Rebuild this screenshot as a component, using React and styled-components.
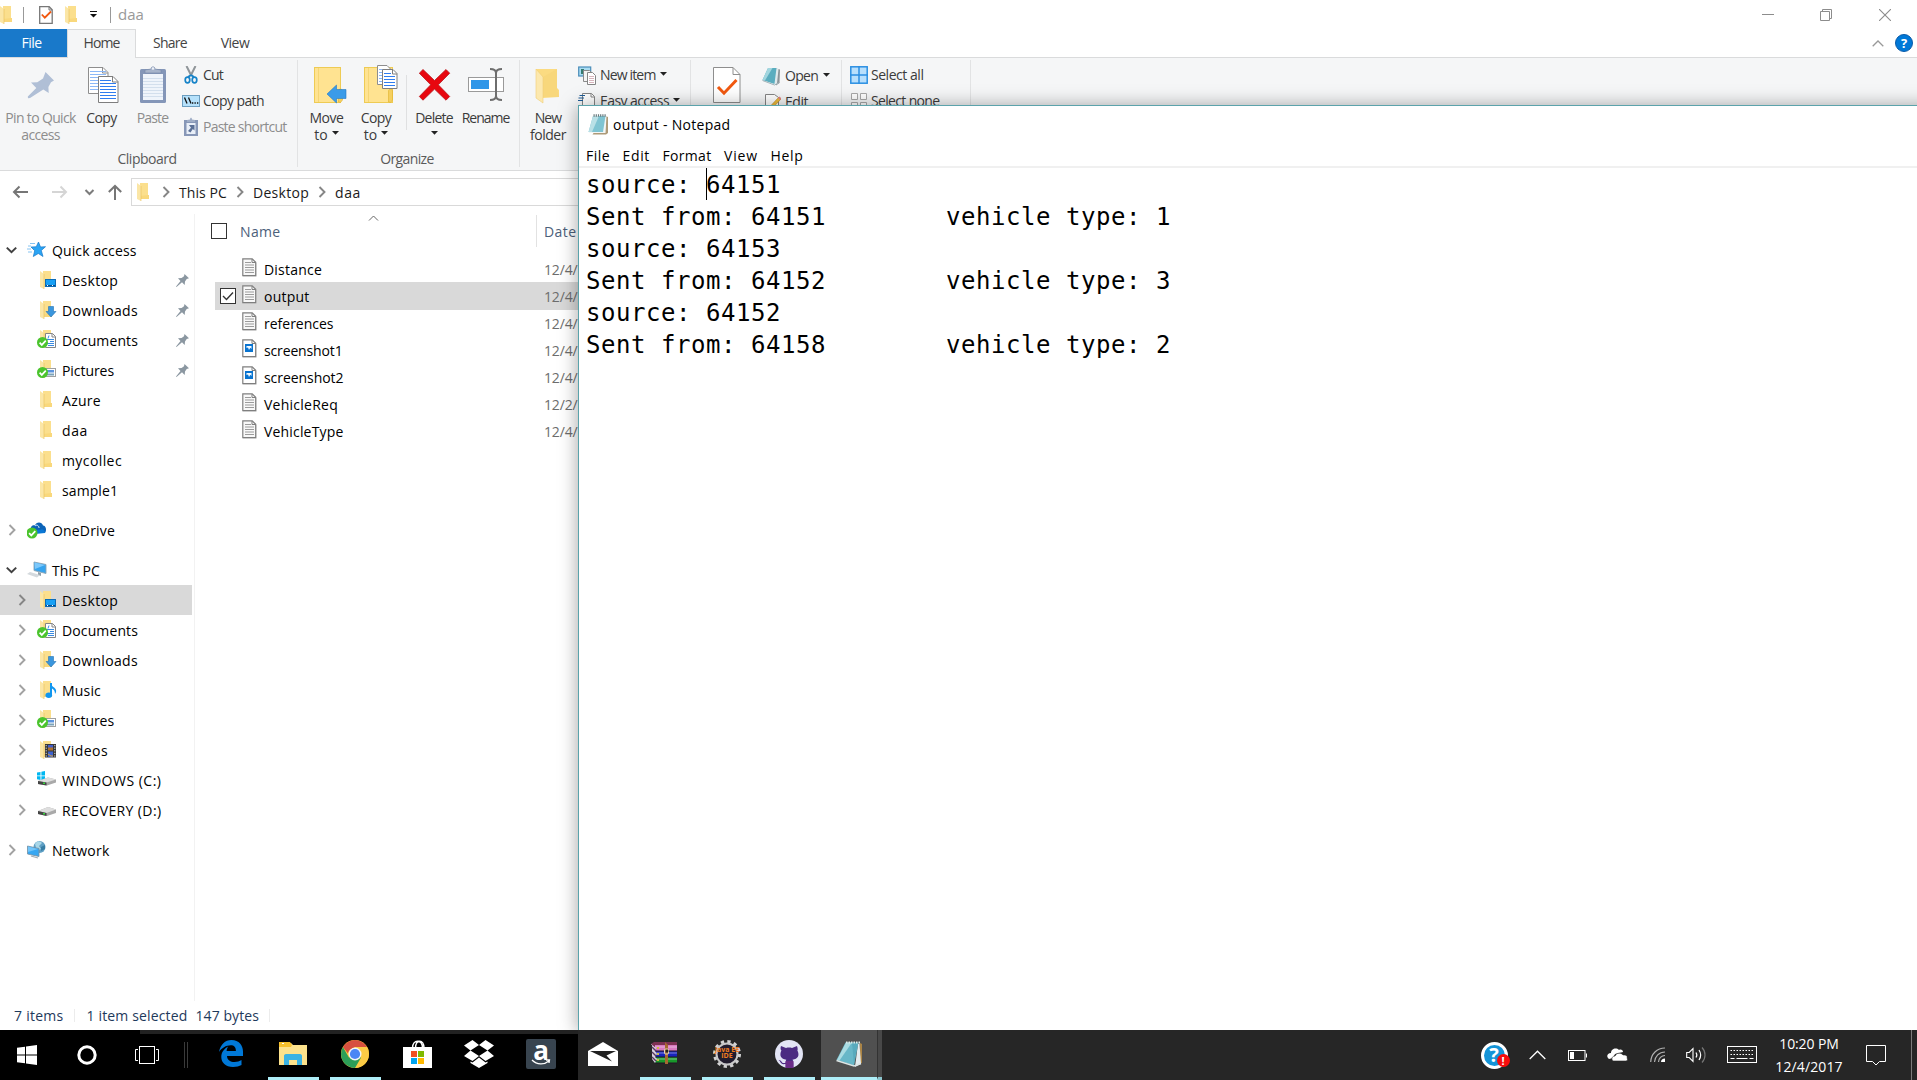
import React, { useLayoutEffect, useRef, useState } from "react";
import styled, { createGlobalStyle, css } from "styled-components";

const GlobalStyle = createGlobalStyle`
  * { box-sizing: border-box; }
  html, body { margin: 0; padding: 0; overflow: hidden; background: #fff; }
  body { font-family: "Open Sans", "Noto Sans", sans-serif; font-size: 14px; color: #000; }
  svg { display: block; flex: none; }
`;

/* ---------- text with controlled tracking ---------- */

const SIDE_BEARING = 1.5;

const Run = styled.span`
  display: inline-block;
  white-space: pre;
`;

function Text({ w, children }) {
  const ref = useRef(null);
  const [tracking, setTracking] = useState(0);
  useLayoutEffect(() => {
    if (!w) return;
    const natural = ref.current.getBoundingClientRect().width;
    setTracking((w + SIDE_BEARING - natural) / String(children).length);
  }, [w, children]);
  return (
    <Run ref={ref} style={{ letterSpacing: `${tracking}px` }}>
      {children}
    </Run>
  );
}

/* ---------- shared drawings ---------- */

const Svg = ({ w, h, children, ...rest }) => (
  <svg width={w} height={h} viewBox={`0 0 ${w} ${h}`} fill="none" {...rest}>
    {children}
  </svg>
);

const FolderShape = () => (
  <>
    <path d="M3 0h8v12h1v4H3z" fill="#f9d87c" />
    <path d="M3 0h8v12L3 13z" fill="#fbdf8d" />
    <path d="M0 0l4 3v15l-4-2z" fill="#fbe6a6" />
    <path d="M4 3v15" stroke="#e8c058" strokeWidth=".6" />
  </>
);

const Folder = () => (
  <Svg w={12} h={18}><FolderShape /></Svg>
);

const GreenCheck = () => (
  <>
    <circle cx="5.5" cy="12.5" r="5.5" fill="#4bc42d" />
    <path d="M2.6 12.6l2.2 2.3 4-4.2" stroke="#fff" strokeWidth="1.7" />
  </>
);

const icons = {
  folder: <Svg w={20} h={20}><g transform="translate(3 1)"><FolderShape /></g></Svg>,
  desktop: (
    <Svg w={20} h={20}>
      <g transform="translate(3 1)"><FolderShape /></g>
      <rect x="8.500" y="9.500" width="10" height="7" fill="#18a0f5" stroke="#0b6cb8" />
      <path d="M9 15.500h9" stroke="#0a4f8a" />
      <path d="M10 15.500h1M15 15.500h1" stroke="#fff" />
    </Svg>
  ),
  downloads: (
    <Svg w={20} h={20}>
      <g transform="translate(3 1)"><FolderShape /></g>
      <path d="M11.500 6.500h5v5h2.500l-5 5.500-5-5.500h2.500z" fill="#3a96dd" stroke="#2472b4" strokeWidth=".6" />
    </Svg>
  ),
  documents: (
    <Svg w={20} h={20}>
      <g transform="translate(3 0)"><FolderShape /></g>
      <path d="M8.500 3.500h7l3 3v11h-10z" fill="#fff" stroke="#858585" />
      <path d="M15 3.500v3.500h3.500" stroke="#858585" />
      <path d="M10 9.500h7M13 11.500h4M10 13.500h7M11 15.500h6M12 5.500l-1 3" stroke="#3b8be0" />
      <GreenCheck />
    </Svg>
  ),
  pictures: (
    <Svg w={20} h={20}>
      <g transform="translate(3 0)"><FolderShape /></g>
      <rect x="8.500" y="8.500" width="10" height="8" fill="#fff" stroke="#a0a0a0" />
      <rect x="10" y="10" width="7" height="2.500" fill="#5b93dd" />
      <path d="M10 14.500h7" stroke="#7ba2b8" strokeWidth="2" />
      <GreenCheck />
    </Svg>
  ),
  music: (
    <Svg w={20} h={20}>
      <g transform="translate(3 1)"><FolderShape /></g>
      <path d="M14 3v12" stroke="#1197f0" strokeWidth="2" />
      <path d="M13 3c2 4 5 4 6 7 .5 2-.5 3-1 4 0-4-2-5-4-6z" fill="#1197f0" />
      <ellipse cx="11.800" cy="15.300" rx="3.300" ry="2.700" fill="#1197f0" />
    </Svg>
  ),
  videos: (
    <Svg w={20} h={20}>
      <g transform="translate(3 1)"><FolderShape /></g>
      <rect x="8" y="4" width="11" height="13.500" fill="#383838" />
      <path d="M9.200 5v12M17.800 5v12" stroke="#ddd" strokeWidth="1" strokeDasharray="1.200 1.400" />
      <rect x="11" y="5" width="5" height="5.500" fill="#b0712d" />
      <rect x="11" y="5" width="5" height="2.500" fill="#425ecb" />
      <rect x="11" y="11.500" width="5" height="5.500" fill="#3d62cf" />
      <path d="M11 14l3 2h2" stroke="#d7a43d" />
    </Svg>
  ),
  windowsDrive: (
    <Svg w={20} h={20}>
      <path d="M0 2.500l3.500-.6v3.600H0zM4.400 1.700L8 1v4.500H4.400zM0 6.300h3.500v3.600L0 9.300zM4.400 6.300H8v4.400l-3.600-.6z" fill="#00b7f1" />
      <path d="M1 11l10-3.500L19 9.500v3L10 15.500 1 14z" fill="#a9a9a9" />
      <path d="M1 11l10-3.500L19 9.500 9.500 12.500z" fill="#dedede" />
      <path d="M1 11l8.500 1.500v3L1 14z" fill="#444" />
      <rect x="6" y="12.500" width="2" height="1.500" fill="#37d43c" />
    </Svg>
  ),
  drive: (
    <Svg w={20} h={20}>
      <path d="M1 11l10-4 8 2.500v3.500l-9 3L1 14z" fill="#a9a9a9" />
      <path d="M1 11l10-4 8 2.500-9.500 3.500z" fill="#dedede" />
      <path d="M1 11l8.500 2v3L1 14z" fill="#444" />
      <rect x="6" y="13" width="2" height="1.500" fill="#37d43c" />
    </Svg>
  ),
  star: (
    <Svg w={20} h={20}>
      <path d="M11.500 2l2 5 5-.3-4.200 3.800 1.700 6-4.700-3-5 3 1.400-5.800L4 7l5.200-.2z" fill="#2aa4f4" stroke="#1878c8" strokeWidth=".7" />
      <path d="M3 3.500h5M1 6h3M0 9h4M1 12h4" stroke="#79bdf0" strokeWidth=".9" />
    </Svg>
  ),
  cloud: (
    <Svg w={20} h={20}>
      <path d="M4 9.500c-1-3 2-5 4-4 1-4 7-4 8 0 3 0 4 5 2 7.500H6z" fill="#0b63b8" />
      <path d="M8 6c2-2 4 0 4 2" stroke="#e8f3ff" />
      <path d="M8 14c0-3 2-5 5-4 2-2 5 0 5 3z" fill="#0a78d6" />
      <g transform="translate(-.5 .5)"><GreenCheck /></g>
    </Svg>
  ),
  pc: (
    <Svg w={20} h={20}>
      <path d="M7 2l12 2.500v9L7 10.500z" fill="#35a3ee" stroke="#8ca3b1" strokeWidth=".9" />
      <path d="M7.500 2.500L18 5 8 9z" fill="#7cc8fb" />
      <path d="M11 12l3 1v3l-3-1z" fill="#90a0aa" />
      <path d="M0 14l3-2 10 3-3 2.500z" fill="#d4d9dd" />
    </Svg>
  ),
  network: (
    <Svg w={20} h={20}>
      <circle cx="12.500" cy="7" r="6" fill="#5e9fc4" />
      <path d="M8 4c2-4 5-3 7-1l-3 3 2 3-4 2z" fill="#a9d7e8" />
      <path d="M14 7l4-2v4l-4 2z" fill="#377da4" />
      <path d="M.5 6L12 8.500v8L.5 14z" fill="#37a7f2" stroke="#7890a0" strokeWidth=".8" />
      <path d="M1 6.500l10 2.500L1 12z" fill="#72c5fa" />
      <path d="M4 16l7 2" stroke="#a4adb2" strokeWidth="1.300" />
    </Svg>
  ),
};

const Caret = ({ open, dark }) => (
  <Svg w={14} h={14}>
    {open ? (
      <path d="M1.800 4.600L6.500 9.200l4.700-4.600" stroke="#404040" strokeWidth="2" />
    ) : (
      <path d="M4.500 2L9.500 7l-5 5" stroke={dark ? "#868686" : "#a2a2a2"} strokeWidth="1.900" />
    )}
  </Svg>
);

const PinSmall = () => (
  <Svg w={13} h={13}>
    <path d="M8.500 0L13 4.300l-2.300.8L9 7.500 8.700 11 6 8.300.5 13 0 12.500 4.500 7 2 4.300l3.600-.2L8 2.300z" fill="#8b97a1" />
  </Svg>
);

const DropArrow = () => (
  <Svg w={7} h={4}><path d="M0 0h7L3.500 3.800z" fill="#222" /></Svg>
);

/* ---------- title bar and tabs ---------- */

const Screen = styled.div`
  position: relative;
  width: 1917px;
  height: 1080px;
  overflow: hidden;
  background: #fff;
`;

const Explorer = styled.div`
  display: flex;
  flex-direction: column;
  height: 1030px;
`;

const TitleBar = styled.header`
  display: flex;
  align-items: center;
  height: 29px;
  padding-right: 26px;
  color: #999;
  font-size: 15px;
`;

const QuickItem = styled.div`
  flex: none;
  margin-left: ${(p) => p.$gap}px;
`;

const TitleName = styled.div`
  margin: -2px 0 0 7px;
`;

const TitleRule = styled.i`
  width: 1px;
  height: 16px;
  margin-left: ${(p) => p.$gap}px;
  background: #999;
`;

const WindowControls = styled.div`
  display: flex;
  gap: 46px;
  margin-left: auto;

  svg:last-child { margin-left: 1px; }
`;

const TabBar = styled.nav`
  display: flex;
  align-items: stretch;
  height: 29px;
  border-bottom: 1px solid #dadbdc;
`;

const Tab = styled.div`
  display: flex;
  align-items: center;
  justify-content: center;
  width: ${(p) => p.$w}px;
  padding-bottom: 1px;
  color: #444;
  ${(p) => p.$file && css`
    background: #1979ca;
    color: #fff;
    height: 28px;
    padding-right: 4px;
  `}
  ${(p) => p.$active && css`
    height: 29px;
    background: #f5f6f7;
    border: 1px solid #dadbdc;
    border-bottom: 0;
    padding-bottom: 3px;
  `}
`;

const TabTools = styled.div`
  display: flex;
  align-items: center;
  gap: 11px;
  margin-left: auto;
  padding-right: 4px;
`;

/* ---------- ribbon ---------- */

const RibbonBar = styled.section`
  display: flex;
  height: 113px;
  background: #f5f6f7;
  border-bottom: 1px solid #dadbdc;
`;

const Group = styled.div`
  display: flex;
  flex-direction: column;
  flex: none;
  width: ${(p) => p.$w}px;
  height: 107px;
  margin-top: 2px;
  border-right: 1px solid #e2e3e4;
`;

const GroupBody = styled.div`
  display: flex;
  align-items: flex-start;
  flex: 1;
  padding: 5px 0 0 ${(p) => p.$left}px;
`;

const GroupName = styled.div`
  height: 20px;
  margin-bottom: -2px;
  padding-right: 3px;
  line-height: 20px;
  text-align: center;
  color: #5a5a5a;
`;

const BigButton = styled.div`
  display: flex;
  flex-direction: column;
  align-items: center;
  flex: none;
  width: ${(p) => p.$w}px;
  color: ${(p) => (p.$off ? "#8d8d8d" : "#3b3b3b")};
  line-height: 17px;
`;

const BigIcon = styled.div`
  height: 44px;
`;

const BigLine = styled.div`
  display: flex;
  align-items: center;
  gap: 4px;
  height: 17px;
`;

const InnerRule = styled.i`
  width: 1px;
  height: 55px;
  margin: 10px 2px 0 5px;
  background: #dfe0e1;
`;

const SmallColumn = styled.div`
  display: flex;
  flex-direction: column;
  margin-left: ${(p) => p.$left}px;
  padding-top: ${(p) => p.$top || 0}px;
`;

const SmallButton = styled.div`
  display: flex;
  align-items: center;
  gap: ${(p) => p.$gap || 3}px;
  height: 26px;
  margin-top: ${(p) => p.$lift || 0}px;
  color: ${(p) => (p.$off ? "#8d8d8d" : "#3b3b3b")};

  > span { margin-top: -1px; }
`;

const ArrowSlot = styled.div`
  margin: -3px 0 0 1px;
`;

const PageLines = ({ x, y, n, w, color }) =>
  Array.from({ length: n }, (_, i) => (
    <path key={i} d={`M${x} ${y + i * 3}h${w}`} stroke={color} />
  ));

const big = {
  pin: (
    <path d="M24.500 7L33 15.500l-3 1.700-2.600 4.800.3 6-5.400-3.600L9 33l-2 .3-.2-1.800L15.300 23 10 17.500l6.300-.3 5.700-3.600z" fill="#b0bfd6" />
  ),
  copy: (
    <>
      <path d="M6.500 2.500H21l5 5v21H6.500z" fill="#fff" stroke="#8e8e8e" />
      <path d="M20.500 2.500v5.500H26" stroke="#8e8e8e" />
      <PageLines x={8} y={6.5} n={7} w={16} color="#8bb8f8" />
      <path d="M16.500 11.500H31l5 5v21H16.500z" fill="#fff" stroke="#7e7e7e" />
      <path d="M30.500 11.500V17H36" stroke="#7e7e7e" />
      <PageLines x={18} y={15.5} n={1} w={11} color="#2f7df0" />
      <PageLines x={18} y={18.5} n={6} w={16} color="#2f7df0" />
    </>
  ),
  paste: (
    <>
      <rect x="7" y="4" width="26" height="34" rx="1.500" fill="#8496b8" />
      <rect x="10" y="9" width="20" height="26" fill="#eff4fb" />
      <PageLines x={10} y={13.5} n={7} w={20} color="#d3dfed" />
      <path d="M12 8V5l6-1c0-3 4-3 4 0l6 1v3z" fill="#a7b4cb" stroke="#7688a8" strokeWidth=".6" />
      <circle cx="20" cy="3.500" r="1.200" fill="#eef2f8" />
    </>
  ),
  moveTo: (
    <>
      <rect x="7.500" y="2.500" width="26" height="35" fill="#ffe391" stroke="#eecb54" />
      <path d="M11.500 3v34" stroke="#f5d574" />
      <path d="M31.500 37V26c0-2.500 4-2.500 4 0v9l-2 2.500z" fill="#f5cf5f" stroke="#dfb22e" strokeWidth=".6" />
      <path d="M20 29l9.500-9v4.500H39v9h-9.500V38z" fill="#3a9be8" stroke="#257bc4" strokeWidth=".6" />
    </>
  ),
  copyTo: (
    <>
      <rect x="8.500" y="2.500" width="28" height="35" fill="#ffe391" stroke="#eecb54" />
      <path d="M12.500 3v34" stroke="#f5d574" />
      <path d="M32.500 37V26c0-2.500 4-2.500 4 0v9l-2 2.500z" fill="#f5cf5f" stroke="#dfb22e" strokeWidth=".6" />
      <path d="M21.500.5H31l4 4v15H21.500z" fill="#fff" stroke="#8e8e8e" />
      <PageLines x={23} y={4.5} n={5} w={10} color="#8bb8f8" />
      <path d="M26.500 4.500H37l4 4v15H26.500z" fill="#fff" stroke="#7e7e7e" />
      <path d="M36.500 4.500V9H41" stroke="#7e7e7e" />
      <PageLines x={28} y={8.5} n={1} w={7} color="#2f7df0" />
      <PageLines x={28} y={11.5} n={4} w={11} color="#2f7df0" />
    </>
  ),
  remove: (
    <path d="M9 4.500L20.500 15.500 32 4.500l3.700 3.700L24.300 19.800 35.700 31.500 32 35.200 20.500 24.100 9 35.200 5.300 31.500l11.400-11.700L5.300 8.200z" fill="#e8070f" stroke="#b9141a" strokeWidth=".8" />
  ),
  rename: (
    <>
      <rect x="2.500" y="12.500" width="35" height="14" fill="#fff" stroke="#9a9a9a" />
      <rect x="5" y="15" width="18" height="9" fill="#2f96e8" />
      <path d="M24 4c4 0 6 1 6 4 0-3 2-4 6-4M30 7v25M24 35c4 0 6-1 6-4 0 3 2 4 6 4" stroke="#6e6e6e" strokeWidth="2" />
    </>
  ),
  newFolder: (
    <>
      <path d="M8 4h21v19l2 2v7l-16 1z" fill="#fbdb81" />
      <path d="M15 12L29 4v19l2 9H15z" fill="#f7d478" opacity=".6" />
      <path d="M8 4l7 8v26l-7-5z" fill="#fce8ae" stroke="#f0cf75" strokeWidth=".6" />
    </>
  ),
  properties: (
    <>
      <path d="M6.500 2.500H26l7 7v28H6.500z" fill="#fff" stroke="#8e8e8e" />
      <path d="M26 2.500V9.500h7" stroke="#8e8e8e" />
      <path d="M11 22l6 6.200L29.500 15" stroke="#f1580f" strokeWidth="3" />
    </>
  ),
};

const ArrowUp = styled.div`
  margin-top: -4px;
`;

const Big = ({ icon, w, off, lines, arrow }) => (
  <BigButton $w={w} $off={off}>
    <BigIcon><Svg w={40} h={40} overflow="visible">{big[icon]}</Svg></BigIcon>
    {lines.map(([label, width], i) => (
      <BigLine key={label || i}>
        {label && <Text w={width}>{label}</Text>}
        {arrow && i === lines.length - 1 && <ArrowUp><DropArrow /></ArrowUp>}
      </BigLine>
    ))}
  </BigButton>
);

const ScissorsIcon = () => (
  <Svg w={18} h={18}>
    <path d="M4.500 0l5 10M13.500 0l-5 10" stroke="#8f9599" strokeWidth="2" />
    <path d="M9 9l-3 2M9 9l3 2" stroke="#1683c8" strokeWidth="2" />
    <ellipse cx="5.500" cy="14" rx="2.300" ry="2.800" stroke="#1683c8" strokeWidth="1.700" />
    <ellipse cx="12.500" cy="14" rx="2.300" ry="2.800" stroke="#1683c8" strokeWidth="1.700" />
  </Svg>
);

const PathIcon = () => (
  <Svg w={18} h={12}>
    <rect x=".5" y=".5" width="17" height="11" fill="#b5e1fb" stroke="#6c9ec0" />
    <path d="M2.500 2.500l2.500 6M6.500 2.500l2.500 6" stroke="#111" strokeWidth="1.300" />
    <path d="M10 8h1.300M12.500 8h1.300M15 8h1.300" stroke="#111" strokeWidth="1.300" />
  </Svg>
);

const ShortcutIcon = () => (
  <Svg w={18} h={20}>
    <rect x="2" y="3" width="14" height="16" fill="#8797b7" />
    <rect x="4.500" y="6" width="9" height="11" fill="#e9eff8" />
    <path d="M5 5V3l3-.5c0-2.500 2-2.500 2 0l3 .5v2z" fill="#9fadc6" />
    <path d="M7 8h5.500v5.500L10.800 12 8.500 15.500 6 14l3-3.300z" fill="#5b7096" />
  </Svg>
);

const NewItemIcon = () => (
  <Svg w={19} h={19}>
    <rect x=".7" y="1" width="12" height="9" fill="#a9dcf2" stroke="#4a8dba" strokeWidth="1.200" />
    <rect x="3" y="3" width="3" height="5" fill="#367b70" />
    <path d="M5.500 4.500h6l2 2v9h-8z" fill="#f4f4f4" stroke="#8b8b8b" />
    <path d="M9.500 6.500h5l3 3v9h-8z" fill="#fff" stroke="#858585" />
    <path d="M11 10.500h5M11 12.500h5M11 14.500h5M11 16.500h5" stroke="#d7b5bd" />
  </Svg>
);

const EasyAccessIcon = () => (
  <Svg w={19} h={19}>
    <path d="M4.500 1.500h9l3 3v14h-12z" fill="#fff" stroke="#858585" />
    <path d="M13 1.500V5h3.500" stroke="#858585" />
    <path d="M1.500 3.500H7M.5 6H6M0 8.500h5" stroke="#1e5d98" strokeWidth="1.200" />
  </Svg>
);

const NotepadTilt = ({ size }) => (
  <svg width={size} height={size} viewBox="0 0 28 28" fill="none">
    <path d="M25 3l2 1v19l-3 1z" fill="#aa8446" />
    <path d="M24.500 3.500L26 24l-6 3 3-23z" fill="#e5edf0" />
    <path d="M10.500 2.500h13L19 25.500 1.500 20z" fill="#68b7c8" />
    <path d="M11 2.500h6L4.500 20.500 2 20z" fill="#aadbe2" />
    <path d="M17 2.500h6l-4 22z" fill="#4ba0b4" opacity=".55" />
    <path d="M11 2.500h14" stroke="#dce9e7" strokeWidth="2" strokeDasharray="1.500 1" />
    <path d="M1.500 20.500L19 26l7-2.500" stroke="#dce5e5" strokeWidth="1.400" />
  </svg>
);

const OpenIcon = () => (
  <Svg w={19} h={19}>
    <path d="M14 1.500l4 1-.5 13.500-3.500 2.500z" fill="#8c9498" />
    <path d="M13.500 1l3 1-1.500 14.500-2 1.500z" fill="#dfe9ec" />
    <path d="M6 1h8.500l-2 16L.5 13z" fill="#5badbf" />
    <path d="M6 1h4.500L3 13.500.5 13z" fill="#a2d6df" />
    <path d="M.5 13.500L12.500 18l5-2.500" stroke="#a3b3b8" />
  </Svg>
);

const EditIcon = () => (
  <Svg w={19} h={19}>
    <path d="M3.500 1.500h9l4 3v13h-13z" fill="#fff" stroke="#858585" />
    <path d="M9 12.500L17 4l2 2-8 8.500-3 1z" fill="#f0bd3c" stroke="#b98a23" strokeWidth=".6" />
    <path d="M16 5l1.500-1.500 2 2L18 7z" fill="#df8187" />
  </Svg>
);

const SelectIcon = ({ on }) => (
  <Svg w={18} h={18}>
    {on ? (
      <>
        <rect x=".8" y=".8" width="16.400" height="16.400" fill="#b8dffc" stroke="#2b8fe2" strokeWidth="1.500" />
        <path d="M9 0v18M0 9h18" stroke="#2b8fe2" strokeWidth="1.500" />
      </>
    ) : (
      <path d="M1.500 1.500h6v6h-6zM10.500 1.500h6v6h-6zM1.500 10.500h6v6h-6zM10.500 10.500h6v6h-6z" fill="#fff" stroke="#a9a9a9" />
    )}
  </Svg>
);

function Ribbon() {
  return (
    <RibbonBar>
      <Group $w={298}>
        <GroupBody $left={4}>
          <Big icon="pin" w={73} off lines={[["Pin to Quick", 69], ["access", 37]]} />
          <Big icon="copy" w={49} lines={[["Copy", 29]]} />
          <Big icon="paste" w={53} off lines={[["Paste", 30]]} />
          <SmallColumn $left={3} $top={-2}>
            <SmallButton $lift={-3}><ScissorsIcon /><Text w={18.5}>Cut</Text></SmallButton>
            <SmallButton><PathIcon /><Text w={59.5}>Copy path</Text></SmallButton>
            <SmallButton $off><ShortcutIcon /><Text w={82}>Paste shortcut</Text></SmallButton>
          </SmallColumn>
        </GroupBody>
        <GroupName><Text w={57.5}>Clipboard</Text></GroupName>
      </Group>
      <Group $w={222}>
        <GroupBody $left={4}>
          <Big icon="moveTo" w={49} arrow lines={[["Move", 32.5], ["to", 12]]} />
          <Big icon="copyTo" w={50} arrow lines={[["Copy", 29], ["to", 12]]} />
          <InnerRule />
          <Big icon="remove" w={50} arrow lines={[["Delete", 36], ["", 0]]} />
          <Big icon="rename" w={53} lines={[["Rename", 46]]} />
        </GroupBody>
        <GroupName><Text w={52}>Organize</Text></GroupName>
      </Group>
      <Group $w={171}>
        <GroupBody $left={4}>
          <Big icon="newFolder" w={48} lines={[["New", 25], ["folder", 34.5]]} />
          <SmallColumn $left={6}>
            <SmallButton $lift={-3}><NewItemIcon /><Text w={54}>New item</Text><ArrowSlot><DropArrow /></ArrowSlot></SmallButton>
            <SmallButton><EasyAccessIcon /><Text w={67.5}>Easy access</Text><ArrowSlot><DropArrow /></ArrowSlot></SmallButton>
          </SmallColumn>
        </GroupBody>
      </Group>
      <Group $w={151}>
        <GroupBody $left={16}>
          <Big icon="properties" w={40} lines={[]} />
          <SmallColumn $left={15}>
            <SmallButton $lift={-2} $gap={4}><OpenIcon /><Text w={31.5}>Open</Text><ArrowSlot><DropArrow /></ArrowSlot></SmallButton>
            <SmallButton $gap={4}><EditIcon /><Text w={21.5}>Edit</Text></SmallButton>
          </SmallColumn>
        </GroupBody>
      </Group>
      <Group $w={129}>
        <GroupBody $left={8}>
          <SmallColumn $left={0}>
            <SmallButton $lift={-3}><SelectIcon on /><Text w={51}>Select all</Text></SmallButton>
            <SmallButton><SelectIcon /><Text w={67}>Select none</Text></SmallButton>
          </SmallColumn>
        </GroupBody>
      </Group>
    </RibbonBar>
  );
}

/* ---------- address bar ---------- */

const AddressRow = styled.div`
  display: flex;
  align-items: center;
  height: 43px;
  padding: 0 0 1px 12px;
`;

const AddressBox = styled.div`
  display: flex;
  align-items: center;
  flex: 1;
  height: 28px;
  margin-left: 8px;
  padding-left: 5px;
  border: 1px solid #d9d9d9;
  color: #1a1a1a;
`;

const Crumb = styled.div`
  display: flex;
  align-items: center;
  gap: 6px;
  margin-left: ${(p) => p.$gap}px;
`;

const NavGlyph = styled.div`
  margin-right: ${(p) => p.$gap}px;
`;

function AddressBar() {
  return (
    <AddressRow>
      <NavGlyph $gap={22}><Svg w={17} h={16}><path d="M16 8H2M7.500 2.500L2 8l5.500 5.500" stroke="#767676" strokeWidth="2" /></Svg></NavGlyph>
      <NavGlyph $gap={16}><Svg w={17} h={16}><path d="M1 8h14M9.500 2.500L15 8l-5.500 5.500" stroke="#d5d5d5" strokeWidth="2" /></Svg></NavGlyph>
      <NavGlyph $gap={11}><Svg w={12} h={10}><path d="M1.500 3l4 4 4-4" stroke="#7c7c7c" strokeWidth="2" /></Svg></NavGlyph>
      <NavGlyph $gap={0}><Svg w={16} h={16}><path d="M8 16V2M1.800 8L8 2l6.200 6" stroke="#767676" strokeWidth="2" /></Svg></NavGlyph>
      <AddressBox>
        <Folder />
        <Crumb $gap={10}><Caret dark /><Text w={46.5}>This PC</Text></Crumb>
        <Crumb $gap={6}><Caret dark /><Text w={54.5}>Desktop</Text></Crumb>
        <Crumb $gap={6}><Caret dark /><Text w={24.5}>daa</Text></Crumb>
      </AddressBox>
    </AddressRow>
  );
}

/* ---------- navigation pane ---------- */

const Main = styled.div`
  display: flex;
  flex: 1;
  min-height: 0;
`;

const NavPane = styled.aside`
  width: 195px;
  height: 787px;
  padding-top: 21px;
  border-right: 1px solid #f2f2f2;
`;

const NavSection = styled.div`
  margin-bottom: 10px;
`;

const NavRow = styled.div`
  display: flex;
  align-items: center;
  width: 192px;
  height: 30px;
  padding: 0 4px 0 ${(p) => (p.$child ? 15 : 5)}px;
  background: ${(p) => (p.$selected ? "#d9d9d9" : "transparent")};
`;

const NavCaret = styled.div`
  width: ${(p) => (p.$child ? 22 : 22)}px;
`;

const NavIcon = styled.div`
  width: ${(p) => (p.$child ? 25 : 25)}px;
`;

const NavPin = styled.div`
  margin: 0 -1px 0 auto;
`;

const quick = [
  ["desktop", "Desktop", 54.5, true],
  ["downloads", "Downloads", 74.5, true],
  ["documents", "Documents", 74.5, true],
  ["pictures", "Pictures", 50.5, true],
  ["folder", "Azure", 37.5],
  ["folder", "daa", 24.5],
  ["folder", "mycollec", 58.5],
  ["folder", "sample1", 54.5],
];

const pc = [
  ["desktop", "Desktop", 54.5],
  ["documents", "Documents", 74.5],
  ["downloads", "Downloads", 74.5],
  ["music", "Music", 37.5],
  ["pictures", "Pictures", 50.5],
  ["videos", "Videos", 44.5],
  ["windowsDrive", "WINDOWS (C:)", 98],
  ["drive", "RECOVERY (D:)", 98],
];

const NavItem = ({ icon, label, w, child, caret, open, pin, selected }) => (
  <NavRow $child={child} $selected={selected}>
    <NavCaret $child={child}>{caret && <Caret open={open} dark={selected} />}</NavCaret>
    <NavIcon $child={child}>{icons[icon]}</NavIcon>
    <Text w={w}>{label}</Text>
    {pin && <NavPin><PinSmall /></NavPin>}
  </NavRow>
);

function Navigation() {
  return (
    <NavPane>
      <NavSection>
        <NavItem icon="star" label="Quick access" w={83} caret open />
        {quick.map(([icon, label, w, pin]) => (
          <NavItem key={label} icon={icon} label={label} w={w} pin={pin} child />
        ))}
      </NavSection>
      <NavSection><NavItem icon="cloud" label="OneDrive" w={61.5} caret /></NavSection>
      <NavSection>
        <NavItem icon="pc" label="This PC" w={46.5} caret open />
        {pc.map(([icon, label, w], i) => (
          <NavItem key={label} icon={icon} label={label} w={w} child caret selected={i === 0} />
        ))}
      </NavSection>
      <NavSection><NavItem icon="network" label="Network" w={56} caret /></NavSection>
    </NavPane>
  );
}

/* ---------- file list ---------- */

const FilePane = styled.section`
  flex: 1;
  padding-left: 16px;
`;

const ListHead = styled.div`
  display: flex;
  align-items: center;
  height: 32px;
  margin-top: 1px;
  color: #4c607a;
`;

const CheckBox = styled.div`
  display: flex;
  align-items: center;
  justify-content: center;
  flex: none;
  width: 16px;
  height: 16px;
  background: #fff;
  border: 1px solid #333;
  visibility: ${(p) => (p.$hidden ? "hidden" : "visible")};
`;

const HeadName = styled.div`
  display: flex;
  align-items: center;
  width: 310px;
  height: 32px;
  padding-left: 13px;
  border-right: 1px solid #e2e2e2;
`;

const SortMark = styled.div`
  margin: -25px 0 0 87px;
`;

const HeadDate = styled.div`
  padding-left: 7px;
`;

const Rows = styled.div`
  padding: 8px 0 0 4px;
`;

const FileRow = styled.div`
  display: flex;
  align-items: center;
  height: 27px;
  padding-left: 5px;
  ${(p) => p.$selected && css`
    height: 28px;
    margin-bottom: -1px;
    background: #d9d9d9;
  `}
`;

const FileIcon = styled.div`
  margin: -3px 7px 0 6px;
`;

const FileName = styled.div`
  width: 280px;
  padding-top: 1px;
`;

const FileDate = styled.div`
  padding-top: 1px;
  color: #6d6d6d;
`;

const TextFileIcon = ({ image }) => (
  <Svg w={15} h={19}>
    <path d="M1 1h9.500l4 4v13.500H1z" fill="#cfcfcf" />
    <path d="M.8.800h9.400l3.500 3.500v13.400H.8z" fill={image ? "#fff" : "#f8f8f8"} stroke="#7f7f7f" strokeWidth="1.200" />
    <path d="M10 1v3.500h3.500" stroke="#7f7f7f" />
    {image ? (
      <>
        <rect x="3" y="5" width="8" height="8" fill="#0a74d0" />
        <path d="M4.500 7h5v3L8.300 8.700 7 11 6 8.500l-1.500.5z" fill="#f3faff" />
      </>
    ) : (
      <path d="M3 4.500h6M3 7h9M3 9.500h9M3 12h9M3 14.500h9" stroke="#9b9b9b" strokeWidth="1" />
    )}
  </Svg>
);

const files = [
  ["Distance", 56.5, "12/4/"],
  ["output", 44, "12/4/"],
  ["references", 68, "12/4/"],
  ["screenshot1", 77, "12/4/"],
  ["screenshot2", 78, "12/4/"],
  ["VehicleReq", 72.5, "12/2/"],
  ["VehicleType", 78, "12/4/"],
];

function FileList() {
  return (
    <FilePane>
      <ListHead>
        <CheckBox />
        <HeadName>
          <Text w={39}>Name</Text>
          <SortMark><Svg w={11} h={7}><path d="M1 5.500L5.500 1 10 5.500" stroke="#666" /></Svg></SortMark>
        </HeadName>
        <HeadDate><Text w={31}>Date</Text></HeadDate>
      </ListHead>
      <Rows>
        {files.map(([name, w, date]) => {
          const selected = name === "output";
          return (
            <FileRow key={name} $selected={selected}>
              <CheckBox $hidden={!selected}>
                <Svg w={12} h={10}><path d="M1 5l3.500 3.500L11 1.500" stroke="#333" strokeWidth="1.400" /></Svg>
              </CheckBox>
              <FileIcon><TextFileIcon image={name.startsWith("screen")} /></FileIcon>
              <FileName><Text w={w}>{name}</Text></FileName>
              <FileDate><Text w={32}>{date}</Text></FileDate>
            </FileRow>
          );
        })}
      </Rows>
    </FilePane>
  );
}

const StatusBar = styled.footer`
  display: flex;
  align-items: center;
  height: 29px;
  padding-left: 14px;
  color: #1e395b;
`;

const StatusRule = styled.i`
  width: 1px;
  height: 13px;
  margin: 0 ${(p) => p.$after}px 0 10px;
  background: #ececec;
`;

const StatusGap = styled.i`
  width: 8px;
`;

/* ---------- notepad ---------- */

const NotepadWindow = styled.section`
  position: absolute;
  left: 578px;
  top: 105px;
  width: 1400px;
  height: 926px;
  border: 1px solid #5ba3ab;
  background: #fff;
  box-shadow: 0 1px 18px rgba(0, 0, 0, 0.36);
`;

const NotepadTitle = styled.div`
  display: flex;
  align-items: center;
  gap: 4px;
  height: 37px;
  padding-left: 9px;
`;

const MenuBar = styled.div`
  display: flex;
  align-items: center;
  gap: 12.5px;
  height: 25px;
  padding: 2px 0 0 7px;
  border-bottom: 2px solid #f0f0f0;
`;

const Editor = styled.pre`
  margin: 0;
  padding: 1px 0 0 7px;
  font-family: "DejaVu Sans Mono", monospace;
  font-size: 24px;
  letter-spacing: 0.55px;
  line-height: 32px;
`;

const InsertionPoint = styled.i`
  display: inline-block;
  width: 1px;
  height: 32px;
  margin: -1px -1px 0 0;
  background: #000;
  vertical-align: top;
`;

const NotepadIcon = () => (
  <Svg w={21} h={21}>
    <path d="M17.500 2l2.500 1v16l-2 1.500H4.500z" fill="#ae9a78" />
    <path d="M5 2h13.500L17.500 19H1z" fill="#f2f6f6" />
    <path d="M5 2h12.500l-2.500 16H.5z" fill="#7fc4d2" />
    <path d="M5 2h6L4 18H.5z" fill="#b9e0e6" />
    <path d="M5.500 1.500H18" stroke="#67797d" strokeWidth="2.500" strokeDasharray="1.200 1" />
  </Svg>
);

const menus = [["File", 22.5], ["Edit", 26], ["Format", 47.5], ["View", 32.5], ["Help", 31.5]];

function Notepad() {
  return (
    <NotepadWindow>
      <NotepadTitle><NotepadIcon /><Text w={116}>output - Notepad</Text></NotepadTitle>
      <MenuBar>{menus.map(([m, w]) => <Text key={m} w={w}>{m}</Text>)}</MenuBar>
      <Editor>
        {"source: "}<InsertionPoint />{"64151\n"}
        {"Sent from: 64151        vehicle type: 1\n"}
        {"source: 64153\n"}
        {"Sent from: 64152        vehicle type: 3\n"}
        {"source: 64152\n"}
        {"Sent from: 64158        vehicle type: 2"}
      </Editor>
    </NotepadWindow>
  );
}

/* ---------- taskbar ---------- */

const TaskbarRoot = styled.footer`
  position: relative;
  display: flex;
  height: 50px;
  background: linear-gradient(90deg, #000 0 578px, #262626 578px);
  color: #fff;
`;

const TopShade = styled.i`
  position: absolute;
  left: 140px;
  top: 0;
  width: 438px;
  height: 4px;
  background: #222;
`;

const TaskButton = styled.div`
  display: flex;
  align-items: center;
  justify-content: center;
  flex: none;
  width: ${(p) => p.$w || 62}px;
  padding: 0 5px;
`;

const TaskFace = styled.div`
  display: flex;
  align-items: center;
  justify-content: center;
  width: 51px;
  height: 50px;
  border-bottom: 3px solid ${(p) => (p.$running ? "#aeeef8" : "transparent")};
`;

const ActiveTask = styled.div`
  display: flex;
  align-items: center;
  justify-content: center;
  width: 57px;
  height: 50px;
  margin-left: 1px;
  background: #505050;
  border-right: 1px solid #333;
  border-bottom: 3px solid #aeeef8;
`;

const StackEdge = styled.i`
  width: 4px;
  height: 50px;
  background: #484848;
  border-bottom: 3px solid #8cc7d0;
`;

const Grip = styled.div`
  display: flex;
  align-items: center;
  gap: 2px;
  margin-left: 5px;
  width: 17px;
`;

const GripLine = styled.i`
  width: 1px;
  height: 26px;
  background: #3a3a3a;
`;

const Tray = styled.div`
  display: flex;
  align-items: center;
  margin-left: auto;
`;

const TraySlot = styled.div`
  display: flex;
  justify-content: center;
  width: ${(p) => p.$w}px;
`;

const Clock = styled.div`
  display: flex;
  flex-direction: column;
  align-items: center;
  width: 74px;
  line-height: 22.5px;
  margin-bottom: -1px;
`;

const ShowDesktop = styled.i`
  width: 6px;
  height: 50px;
  margin-left: 5px;
  border-left: 1px solid #7b7b7b;
`;

const AmazonTile = styled.div`
  display: flex;
  justify-content: center;
  position: relative;
  width: 30px;
  height: 30px;
  border-radius: 2px;
  background: #38444f;
  font-size: 26px;
  font-weight: 700;
  line-height: 22px;
`;

const AmazonSmile = styled.svg`
  position: absolute;
  left: 5px;
  bottom: 4px;
`;

const EclipseBadge = styled.div`
  position: relative;
  width: 28px;
  height: 28px;
`;

const EclipseLabel = styled.span`
  position: absolute;
  left: -2px;
  top: 7px;
  width: 32px;
  color: #f07c20;
  font-size: 7px;
  font-weight: 700;
  line-height: 6.5px;
  text-align: center;
  white-space: pre;
`;

const HelpBadge = styled.div`
  display: flex;
  align-items: center;
  justify-content: center;
  width: ${(p) => p.$size}px;
  height: ${(p) => p.$size}px;
  border: ${(p) => p.$ring};
  border-radius: 50%;
  background: ${(p) => p.$bg};
  color: #fff;
  font-size: ${(p) => p.$font}px;
  font-weight: 700;
  line-height: 1;
  position: relative;
`;

const Alert = styled.span`
  position: absolute;
  right: -5px;
  bottom: -1px;
  width: 13px;
  height: 13px;
  border-radius: 50%;
  background: #f80c0c;
  font-size: 11px;
  line-height: 13px;
  text-align: center;
`;

const WindowsLogo = () => (
  <Svg w={20} h={20}>
    <path d="M0 2.800L8 1.700v7.800H0zM9 1.500L20 0v9.500H9zM0 10.500h8v7.800l-8-1.100zM9 10.500h11V20L9 18.500z" fill="#fff" />
  </Svg>
);

const TaskView = () => (
  <Svg w={24} h={18}>
    <rect x="4.500" y=".5" width="15" height="17" stroke="#fff" />
    <path d="M3 3.500H.5v11H3M21 3.500h2.500v11H21" stroke="#fff" />
  </Svg>
);

const EdgeLogo = () => (
  <Svg w={25} h={27}>
    <path d="M0 12C1.500 4.500 6 0 12.500 0 20 0 24 5.500 24 11.500V16H8c.2 4 3.500 6 7.500 6 2.800 0 5-.8 7-2v5c-2.300 1.300-5 2-8.500 2C6.500 27 2.300 22.500 2.300 17c0-5 3-8.500 7-10.500-1.200 1.500-1.500 2.800-1.700 4.500h9.300c0-4-1.800-5.800-5.200-5.800C7 5.200 2.500 8 0 12z" fill="#0078d7" />
  </Svg>
);

const ExplorerLogo = () => (
  <Svg w={28} h={24}>
    <path d="M0 1h12l2 2h14v20H0z" fill="#fde28c" />
    <path d="M0 0h11l2 3-1 2H0z" fill="#f6c02c" />
    <path d="M3 1.500h2" stroke="#fff" />
    <path d="M5 23V14c0-1 .5-2 2-2h14c1.500 0 2 1 2 2v9h-5v-5h-8v5z" fill="#3bb3e4" />
  </Svg>
);

const ChromeLogo = () => (
  <Svg w={28} h={28}>
    <circle cx="14" cy="14" r="14" fill="#fcc934" />
    <path d="M1.900 7A14 14 0 0 1 26.100 7H14L8 10.500l-1 3z" fill="#d7503f" />
    <path d="M26.100 7H14l6.100 10.500L14 28A14 14 0 0 0 26.100 7z" fill="#fccb45" />
    <path d="M1.900 7A14 14 0 0 0 14 28l6.100-10.500H14L7.900 17.500z" fill="#2c9e58" />
    <circle cx="14" cy="14" r="6.500" fill="#f3f4f6" />
    <circle cx="14" cy="14" r="5.100" fill="#4a86f5" />
  </Svg>
);

const StoreLogo = () => (
  <Svg w={29} h={28}>
    <path d="M9.500 8c0-9 10-9 10 0M12.500 8c0-9 8.500-9 8.500 0" stroke="#fff" strokeWidth="1.500" />
    <path d="M0 7h29v21H0z" fill="#fff" />
    <path d="M8 11h6v6H8z" fill="#f25022" />
    <path d="M15 11h6v6h-6z" fill="#7fba00" />
    <path d="M8 18h6v6H8z" fill="#00a4ef" />
    <path d="M15 18h6v6h-6z" fill="#ffb900" />
  </Svg>
);

const DropboxLogo = () => (
  <Svg w={30} h={28}>
    <path d="M8.500 0L15 5 6.500 10.500 0 5.500zM21.500 0L30 5.500l-6.500 5L15 5zM0 16l6.500-5.500L15 16l-6.500 5zM30 16l-6.500-5.500L15 16l6.500 5zM6.500 21.500l2 1 6.500-5 6.500 5 2-1V23L15 28l-8.500-5z" fill="#fff" />
  </Svg>
);

const MailLogo = () => (
  <Svg w={30} h={24}>
    <path d="M0 9L15 0l15 9v15H0z" fill="#fff" />
    <path d="M2 9l22 10.500L18.500 13.500 28 9z" fill="#202020" />
  </Svg>
);

const WinrarLogo = () => (
  <Svg w={28} h={24}>
    <path d="M0 2l3-2h23v7H4z" fill="#7c3152" />
    <path d="M4 3h22v6H4z" fill="#d77ac0" />
    <path d="M4 9h22v6H4z" fill="#1924bd" />
    <path d="M4 15h22v6H4z" fill="#18982a" />
    <path d="M4 5h22M4 11h22M4 17h22" stroke="#fff" strokeOpacity=".45" />
    <path d="M4 9h22M4 15h22M4 21h22" stroke="#211525" />
    <path d="M0 2l5 4-1 3 2 3-2 3 2 2-2 4-3-4V2z" fill="#d7cfdd" />
    <path d="M1 5l4 4M1 10l4 4M1 15l4 4" stroke="#57385f" strokeWidth="1.400" />
    <path d="M7 5v14" stroke="#cfb83e" strokeDasharray="2 4" strokeWidth="2" />
    <path d="M14 0l3 3v19h-3z" fill="#a66931" />
    <rect x="13.500" y="7" width="4" height="5" rx="1" stroke="#e1d8ba" />
    <circle cx="16" cy="9" r="1.500" fill="#222" />
  </Svg>
);

const GearLogo = () => (
  <EclipseBadge>
    <Svg w={28} h={28}>
      <circle cx="14" cy="14" r="12.500" stroke="#d2d2d2" strokeWidth="3" strokeDasharray="3.270 3.270" />
      <circle cx="14" cy="14" r="10.500" fill="#211c2d" stroke="#c9c9c9" strokeWidth="2" />
    </Svg>
    <EclipseLabel>{"Java EE\nIDE"}</EclipseLabel>
  </EclipseBadge>
);

const GithubLogo = () => (
  <Svg w={28} h={28}>
    <circle cx="14" cy="14" r="14" fill="#e2e4f5" />
    <path d="M6 6l5 2c2-.6 4-.6 6 0l5-2c.8 2 .8 3.500.4 4.500 2.500 5 .5 8.500-4.900 9.300.8 1 1 2 1 3.500V28h-8v-4c-4 .7-4.500-1-5.500-2.500-.6-1-1.500-1.500-1.500-1.500 3-.5 3 3.200 5 3 1 0 2 0 2-.5 0-1.200.3-2 .8-2.700-5.300-.8-7.300-4.300-4.900-9.300C5.500 9.500 5.300 8 6 6z" fill="#4b2b82" />
    <path d="M10.500 21h8v7h-8z" fill="#7d2b8b" opacity=".6" />
  </Svg>
);

const AmazonLogo = () => (
  <AmazonTile>
    a
    <AmazonSmile width="20" height="6" viewBox="0 0 20 6" fill="none">
      <path d="M1 1c5 5 12 5 17 1M15 1h3.500L18 4" stroke="#fff" strokeWidth="1.300" />
    </AmazonSmile>
  </AmazonTile>
);

const apps = [
  [EdgeLogo, false], [ExplorerLogo, true], [ChromeLogo, true], [StoreLogo, false], [DropboxLogo, false],
  [AmazonLogo, false], [MailLogo, false], [WinrarLogo, true], [GearLogo, true], [GithubLogo, true],
];

function Taskbar() {
  return (
    <TaskbarRoot>
      <TopShade />
      <TaskButton $w={54}><WindowsLogo /></TaskButton>
      <TaskButton $w={66}><Svg w={20} h={20}><circle cx="10" cy="10" r="8.200" stroke="#fff" strokeWidth="3" /></Svg></TaskButton>
      <TaskButton $w={54}><TaskView /></TaskButton>
      <TaskButton $w={26}><Grip><GripLine /><GripLine /></Grip></TaskButton>
      {apps.map(([Logo, running], i) => (
        <TaskButton key={i}><TaskFace $running={running}><Logo /></TaskFace></TaskButton>
      ))}
      <ActiveTask><NotepadTilt size={28} /></ActiveTask>
      <StackEdge />
      <Tray>
        <TraySlot $w={50}>
          <HelpBadge $size={27} $ring="3px solid #fff" $bg="#1494d8" $font={20}>?<Alert>!</Alert></HelpBadge>
        </TraySlot>
        <TraySlot $w={36}><Svg w={17} h={10}><path d="M.7 9L8.500 1.200 16.300 9" stroke="#fff" strokeWidth="1.300" /></Svg></TraySlot>
        <TraySlot $w={45}>
          <Svg w={19} h={11}><rect x=".5" y=".5" width="16.500" height="10" stroke="#fff" /><path d="M18.500 3.500v4" stroke="#fff" /><rect x="2" y="2" width="4" height="7" fill="#fff" /></Svg>
        </TraySlot>
        <TraySlot $w={34}>
          <Svg w={21} h={14}><path d="M2 11c-3-2-2-6 2-6 0-4 5-6 8-3 2-1 4 0 4 2l-4 1-4 1-2 4z" fill="#fff" /><path d="M6 13c-2-2-1-5 2-5 1-3 6-4 8-1 3-.5 5 1 4 3 1 1 .5 3-1 3z" fill="#fff" stroke="#262626" strokeWidth=".6" /></Svg>
        </TraySlot>
        <TraySlot $w={47}>
          <Svg w={16} h={16}><path d="M.7 15C1 7 7 1 15 1M4.500 15C5 9.500 9 5 15 5M8.500 15c0-3.500 3-6.500 6.500-6.500" stroke="#b0b0b0" strokeWidth="1.200" /><path d="M11 15c0-2 1.500-3.500 4-3.500V15z" fill="#fff" /></Svg>
        </TraySlot>
        <TraySlot $w={31}>
          <Svg w={21} h={18}><path d="M.7 6.500h2.500L7 2.700v12.600L3.200 11.500H.7z" stroke="#fff" strokeWidth="1.100" /><path d="M10 6.500c1 1.500 1 3.500 0 5M13 4c2 3 2 7 0 10" stroke="#fff" strokeWidth="1.200" /><path d="M16 1.500c4 4 4 11 0 15" stroke="#777" strokeWidth="1.200" /></Svg>
        </TraySlot>
        <TraySlot $w={60}>
          <Svg w={30} h={18}><rect x=".5" y=".5" width="29" height="16" stroke="#fff" /><path d="M3.500 4.500h23M3.500 8.500h23" stroke="#fff" strokeDasharray="1.500 1.500" /><path d="M3.500 12.500h4M9.500 12.500h11M22.500 12.500h4" stroke="#fff" /></Svg>
        </TraySlot>
        <Clock><Text w={58}>10:20 PM</Text><Text w={66}>12/4/2017</Text></Clock>
        <TraySlot $w={60}>
          <Svg w={20} h={21}><path d="M.5.500h19v16h-6L10 20l-3.500-3.500h-6z" stroke="#fff" /></Svg>
        </TraySlot>
        <ShowDesktop />
      </Tray>
    </TaskbarRoot>
  );
}

/* ---------- page ---------- */

export default function App() {
  return (
    <Screen>
      <GlobalStyle />
      <Explorer>
        <TitleBar>
          <QuickItem $gap={0}><Folder /></QuickItem>
          <TitleRule $gap={11} />
          <QuickItem $gap={15}>
            <Svg w={14} h={18}><path d="M.7.700h9.500l3 3v13.600H.7z" fill="#fff" stroke="#777" strokeWidth="1.300" /><path d="M10 1v3h3" stroke="#777" /><path d="M2.800 8.500l3 3.200L12 5.500" stroke="#f1580f" strokeWidth="1.800" /></Svg>
          </QuickItem>
          <QuickItem $gap={12}><Folder /></QuickItem>
          <QuickItem $gap={13}><Svg w={7} h={7}><path d="M0 .5h7" stroke="#111" /><path d="M0 3h7L3.500 6.500z" fill="#111" /></Svg></QuickItem>
          <TitleRule $gap={13} />
          <TitleName><Text w={24.5}>daa</Text></TitleName>
          <WindowControls>
            <Svg w={12} h={12}><path d="M0 5.500h12" stroke="#8c8c8c" /></Svg>
            <Svg w={12} h={12}><path d="M.5 2.500h9v9h-9zM2.500 2V.5h9v9H10" stroke="#8c8c8c" /></Svg>
            <Svg w={12} h={12}><path d="M0 0l12 12M12 0L0 12" stroke="#8c8c8c" strokeWidth="1.100" /></Svg>
          </WindowControls>
        </TitleBar>
        <TabBar>
          <Tab $w={67} $file><Text w={18.5}>File</Text></Tab>
          <Tab $w={69} $active><Text w={34.5}>Home</Text></Tab>
          <Tab $w={68}><Text w={32.5}>Share</Text></Tab>
          <Tab $w={62}><Text w={27}>View</Text></Tab>
          <TabTools>
            <Svg w={12} h={7}><path d="M.7 6.300L6 1l5.300 5.300" stroke="#999" strokeWidth="1.300" /></Svg>
            <HelpBadge $size={18} $ring="1px solid #0a5ba8" $bg="#0078d7" $font={13}>?</HelpBadge>
          </TabTools>
        </TabBar>
        <Ribbon />
        <AddressBar />
        <Main>
          <Navigation />
          <FileList />
        </Main>
        <StatusBar>
          <Text w={48}>7 items</Text><StatusRule $after={12} />
          <Text w={99.5}>1 item selected</Text><StatusGap /><Text w={62}>147 bytes</Text><StatusRule $after={0} />
        </StatusBar>
      </Explorer>
      <Notepad />
      <Taskbar />
    </Screen>
  );
}
